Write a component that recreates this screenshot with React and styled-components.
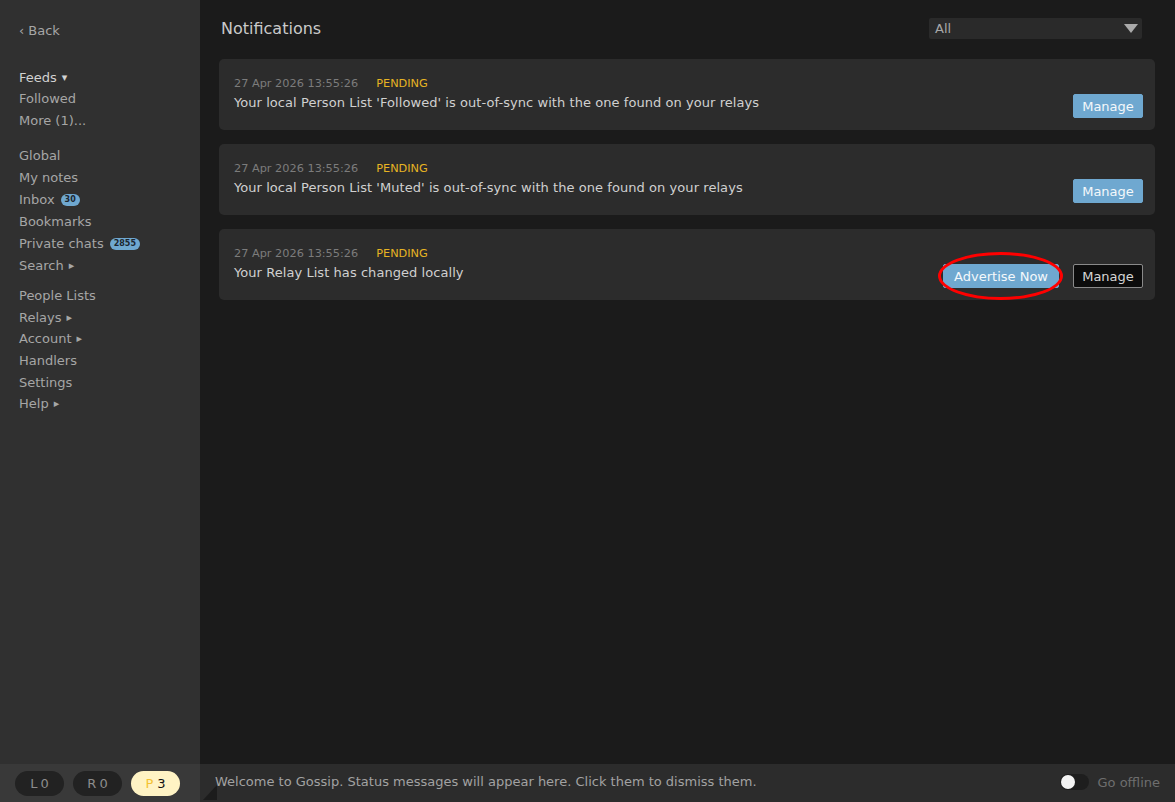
import styled, { createGlobalStyle } from "styled-components";

const GlobalStyle = createGlobalStyle`
  html, body {
    margin: 0;
    padding: 0;
    background: #1b1b1b;
    font-family: "DejaVu Sans", "Liberation Sans", sans-serif;
  }
  * { box-sizing: border-box; }
`;

const notifications = [
  {
    date: "27 Apr 2026 13:55:26",
    text: "Your local Person List 'Followed' is out-of-sync with the one found on your relays",
  },
  {
    date: "27 Apr 2026 13:55:26",
    text: "Your local Person List 'Muted' is out-of-sync with the one found on your relays",
  },
  {
    date: "27 Apr 2026 13:55:26",
    text: "Your Relay List has changed locally",
    advertise: true,
  },
];

export default function App() {
  return (
    <>
      <GlobalStyle />
      <Shell>
        <Sidebar>
          <NavItem>‹ Back</NavItem>
          <NavGroup $gap={25} $row={21.5}>
            <NavItem $bright>
              Feeds <Arrow>▾</Arrow>
            </NavItem>
            <NavItem>Followed</NavItem>
            <NavItem>More (1)...</NavItem>
          </NavGroup>
          <NavGroup $gap={13}>
            <NavItem>Global</NavItem>
            <NavItem>My notes</NavItem>
            <NavItem>
              Inbox <Badge>30</Badge>
            </NavItem>
            <NavItem>Bookmarks</NavItem>
            <NavItem>
              Private chats <Badge>2855</Badge>
            </NavItem>
            <NavItem>
              Search <Arrow>▸</Arrow>
            </NavItem>
          </NavGroup>
          <NavGroup $gap={9} $row={21.6}>
            <NavItem>People Lists</NavItem>
            <NavItem>
              Relays <Arrow>▸</Arrow>
            </NavItem>
            <NavItem>
              Account <Arrow>▸</Arrow>
            </NavItem>
            <NavItem>Handlers</NavItem>
            <NavItem>Settings</NavItem>
            <NavItem>
              Help <Arrow>▸</Arrow>
            </NavItem>
          </NavGroup>
        </Sidebar>

        <Main>
          <Header>
            <Title>Notifications</Title>
            <Select>
              <span>All</span>
              <SelectCaret />
            </Select>
          </Header>
          <CardList>
            {notifications.map((n, i) => (
              <Card key={i}>
                <CardBody>
                  <Meta>
                    <DateText>{n.date}</DateText>
                    <Status>PENDING</Status>
                  </Meta>
                  <Message>{n.text}</Message>
                </CardBody>
                <Actions>
                  {n.advertise && (
                    <Highlight>
                      <Button $wide>Advertise Now</Button>
                      <Ring />
                    </Highlight>
                  )}
                  <Button $dark={n.advertise}>Manage</Button>
                </Actions>
              </Card>
            ))}
          </CardList>
        </Main>

        <Counters>
          <Pill>L 0</Pill>
          <Pill>R 0</Pill>
          <Pill $active>
            <PLetter>P</PLetter> 3
          </Pill>
        </Counters>

        <StatusBar>
          <StatusText>
            Welcome to Gossip. Status messages will appear here. Click them to
            dismiss them.
          </StatusText>
          <Offline>
            <Toggle>
              <Knob />
            </Toggle>
            Go offline
          </Offline>
          <Grip />
        </StatusBar>
      </Shell>
    </>
  );
}

const Shell = styled.div`
  display: grid;
  grid-template-columns: 200px 1fr;
  grid-template-rows: 1fr 38px;
  width: 100vw;
  height: 100vh;
  overflow: hidden;
`;

const Sidebar = styled.nav`
  background: #303030;
  padding: 20px 0 0 19px;
  display: flex;
  flex-direction: column;
`;

const NavGroup = styled.div`
  margin-top: ${(p) => p.$gap}px;
  display: flex;
  flex-direction: column;

  & > div {
    height: ${(p) => p.$row || 22}px;
  }
`;

const NavItem = styled.div`
  height: 22px;
  line-height: 22px;
  font-size: 13px;
  color: ${(p) => (p.$bright ? "#d2d2d2" : "#a6a6a6")};
  display: flex;
  align-items: center;
  gap: 4px;
  white-space: nowrap;
`;

const Arrow = styled.span`
  font-size: 11px;
  margin-left: 1px;
`;

const Badge = styled.span`
  background: #6fa8d0;
  color: #1c2630;
  font-size: 8px;
  font-weight: bold;
  height: 12px;
  line-height: 12px;
  padding: 0 4px;
  border-radius: 6px;
  margin-left: 2px;
`;

const Main = styled.main`
  background: #1b1b1b;
  padding: 0 20px 0 19px;
`;

const Header = styled.div`
  height: 59px;
  display: flex;
  align-items: center;
  justify-content: space-between;
  padding: 0 13px 0 2px;
`;

const Title = styled.h1`
  margin: 0;
  font-size: 16px;
  font-weight: normal;
  color: #cacaca;
  position: relative;
  top: -1px;
`;

const Select = styled.div`
  width: 213px;
  height: 21px;
  background: #2a2a2a;
  border-radius: 2px;
  display: flex;
  align-items: center;
  justify-content: space-between;
  padding: 0 4px 0 6px;
  font-size: 13px;
  color: #a8a8a8;
  position: relative;
  top: -1px;
`;

const SelectCaret = styled.span`
  width: 0;
  height: 0;
  border-left: 7px solid transparent;
  border-right: 7px solid transparent;
  border-top: 9px solid #aaaaaa;
`;

const CardList = styled.div`
  display: flex;
  flex-direction: column;
  gap: 14px;
`;

const Card = styled.div`
  height: 71px;
  background: #2c2c2c;
  border-radius: 5px;
  padding: 17px 12px 12px 15px;
  display: flex;
  justify-content: space-between;
  align-items: flex-end;
`;

const CardBody = styled.div`
  align-self: flex-start;
  display: flex;
  flex-direction: column;
  gap: 3px;
`;

const Meta = styled.div`
  display: flex;
  gap: 18px;
  font-size: 11.3px;
  line-height: 15px;
`;

const DateText = styled.span`
  color: #7c7c7c;
`;

const Status = styled.span`
  color: #e6b423;
`;

const Message = styled.div`
  font-size: 13px;
  line-height: 18px;
  letter-spacing: 0.06px;
  color: #d0d0d0;
`;

const Actions = styled.div`
  display: flex;
  gap: 14px;
`;

const Highlight = styled.div`
  position: relative;
  display: flex;
`;

const Ring = styled.span`
  position: absolute;
  left: -5px;
  top: -12px;
  width: 125px;
  height: 48px;
  border: 3px solid #ff0000;
  border-radius: 50%;
  pointer-events: none;
`;

const Button = styled.button`
  height: 24px;
  padding: 0 ${(p) => (p.$wide ? 10 : 8)}px;
  font-family: inherit;
  font-size: 13px;
  border-radius: 2px;
  cursor: pointer;
  background: ${(p) => (p.$dark ? "#0c0c0c" : "#6fa8d0")};
  color: ${(p) => (p.$dark ? "#d6d6d6" : "#f4f8fb")};
  border: 1px solid ${(p) => (p.$dark ? "#8a8a8a" : "#6fa8d0")};
  min-width: 70px;
`;

const Counters = styled.div`
  background: #393939;
  display: flex;
  align-items: center;
  gap: 9px;
  padding-left: 15px;
`;

const Pill = styled.div`
  width: 49px;
  height: 25px;
  border-radius: 13px;
  background: ${(p) => (p.$active ? "#fff3c4" : "#222222")};
  color: ${(p) => (p.$active ? "#111111" : "#8c8c8c")};
  font-size: 13px;
  display: flex;
  align-items: center;
  justify-content: center;
  gap: 4px;
  word-spacing: -1px;
`;

const PLetter = styled.span`
  color: #f3c233;
`;

const StatusBar = styled.footer`
  background: #2c2c2c;
  display: flex;
  align-items: center;
  justify-content: space-between;
  padding: 0 15px 0 15px;
  position: relative;
`;

const StatusText = styled.span`
  font-size: 13px;
  color: #a2a2a2;
  position: relative;
  top: -2px;
`;

const Offline = styled.div`
  display: flex;
  align-items: center;
  gap: 8px;
  font-size: 13px;
  color: #6e6e6e;
  position: relative;
  top: -1px;
`;

const Toggle = styled.span`
  width: 29px;
  height: 16px;
  border-radius: 8px;
  background: #1e1e1e;
  display: flex;
  align-items: center;
  padding: 1px;
`;

const Knob = styled.span`
  width: 14px;
  height: 14px;
  border-radius: 50%;
  background: #f4f4f4;
`;

const Grip = styled.span`
  position: absolute;
  left: 3px;
  bottom: 2px;
  width: 0;
  height: 0;
  border-bottom: 15px solid #1c1c1c;
  border-left: 14px solid transparent;
`;
